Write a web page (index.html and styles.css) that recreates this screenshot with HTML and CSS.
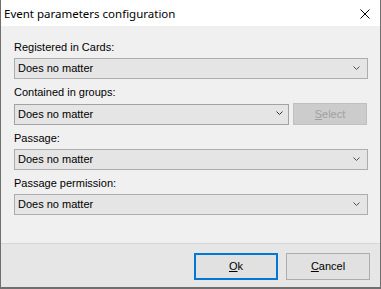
FILE: index.html
```html
<!DOCTYPE html>
<html lang="en">
<head>
    <meta charset="UTF-8">
    <meta name="viewport" content="width=device-width, initial-scale=1.0">
    <title>Event parameters configuration</title>
    <link rel="stylesheet" href="styles.css">
</head>
<body>
    <div class="window">
        <div class="titlebar">
            <span class="title">Event parameters configuration</span>
            <svg class="close" width="10" height="10" viewBox="0 0 10 10">
                <path d="M0.5 0.5 L9.5 9.5 M9.5 0.5 L0.5 9.5" stroke="#000" stroke-width="1" fill="none"/>
            </svg>
        </div>

        <div class="content">
            <div class="field">
                <label class="field-label">Registered in Cards:</label>
                <div class="combo">
                    <span>Does no matter</span>
                    <svg class="chevron" width="7" height="4" viewBox="0 0 7 4"><path d="M0.5 0.5 L3.5 3.5 L6.5 0.5" stroke="#505050" fill="none"/></svg>
                </div>
            </div>
            <div class="field">
                <label class="field-label">Contained in groups:</label>
                <div class="combo-row">
                    <div class="combo combo-focus">
                        <span>Does no matter</span>
                        <svg class="chevron" width="7" height="4" viewBox="0 0 7 4"><path d="M0.5 0.5 L3.5 3.5 L6.5 0.5" stroke="#303030" fill="none"/></svg>
                    </div>
                    <button class="btn btn-disabled" disabled><u>S</u>elect</button>
                </div>
            </div>
            <div class="field">
                <label class="field-label">Passage:</label>
                <div class="combo">
                    <span>Does no matter</span>
                    <svg class="chevron" width="7" height="4" viewBox="0 0 7 4"><path d="M0.5 0.5 L3.5 3.5 L6.5 0.5" stroke="#505050" fill="none"/></svg>
                </div>
            </div>
            <div class="field">
                <label class="field-label">Passage permission:</label>
                <div class="combo">
                    <span>Does no matter</span>
                    <svg class="chevron" width="7" height="4" viewBox="0 0 7 4"><path d="M0.5 0.5 L3.5 3.5 L6.5 0.5" stroke="#505050" fill="none"/></svg>
                </div>
            </div>
        </div>

        <div class="footer">
            <button class="btn btn-dialog btn-default"><u>O</u>k</button>
            <button class="btn btn-dialog"><u>C</u>ancel</button>
        </div>
    </div>
</body>
</html>
```

FILE: styles.css
```css
body {
    margin: 0;
    font-family: "Liberation Sans", Arial, sans-serif;
    font-size: 11px;
    color: #000;
}
.window {
    width: 381px;
    height: 289px;
    box-sizing: border-box;
    border: 1px solid #6f6f6f;
    border-top: none;
    border-bottom-width: 2px;
    background: #f0f0f0;
    display: flex;
    flex-direction: column;
}
.titlebar {
    height: 26px;
    background: #fff;
    display: flex;
    align-items: center;
    justify-content: space-between;
    padding: 0 10px 0 3px;
}
.title {
    font-family: "Noto Sans", sans-serif;
    font-size: 11.5px;
    line-height: 16px;
    margin-top: 1px;
}
.close {
    display: block;
    margin-top: 1px;
}
.content {
    flex: 1;
    padding: 15px 12px 0 13px;
    display: flex;
    flex-direction: column;
    gap: 7px;
}
.field-label {
    display: block;
    line-height: 13px;
    margin-bottom: 4px;
}
.combo {
    height: 21px;
    box-sizing: border-box;
    border: 1px solid #adadad;
    background: #e5e5e5;
    display: flex;
    align-items: center;
    justify-content: space-between;
    padding: 0 7px 0 3px;
    line-height: 13px;
}
.combo-focus {
    border-color: #a2a2a2;
    padding-right: 5px;
}
.chevron {
    display: block;
    margin-top: -2px;
}
.combo-row {
    display: flex;
    align-items: center;
    gap: 4px;
    padding-right: 1px;
}
.combo-row .combo {
    flex: 1;
}
.btn {
    font-family: "Liberation Sans", Arial, sans-serif;
    font-size: 11px;
    line-height: 13px;
    padding: 0;
    box-sizing: border-box;
    border: 1px solid #adadad;
    background: #e1e1e1;
    color: #000;
}
.btn-disabled {
    width: 74px;
    height: 22px;
    background: #cccccc;
    border-color: #bfbfbf;
    color: #a0a0a0;
}
.footer {
    height: 44px;
    box-sizing: border-box;
    border-top: 1px solid #d6d6d6;
    background: #e6e6e6;
    display: flex;
    justify-content: flex-end;
    align-items: flex-start;
    gap: 8px;
    padding: 9px 10px 0 0;
}
.btn-dialog {
    width: 84px;
    height: 27px;
}
.btn-default {
    border: 2px solid #0078d7;
}
```
